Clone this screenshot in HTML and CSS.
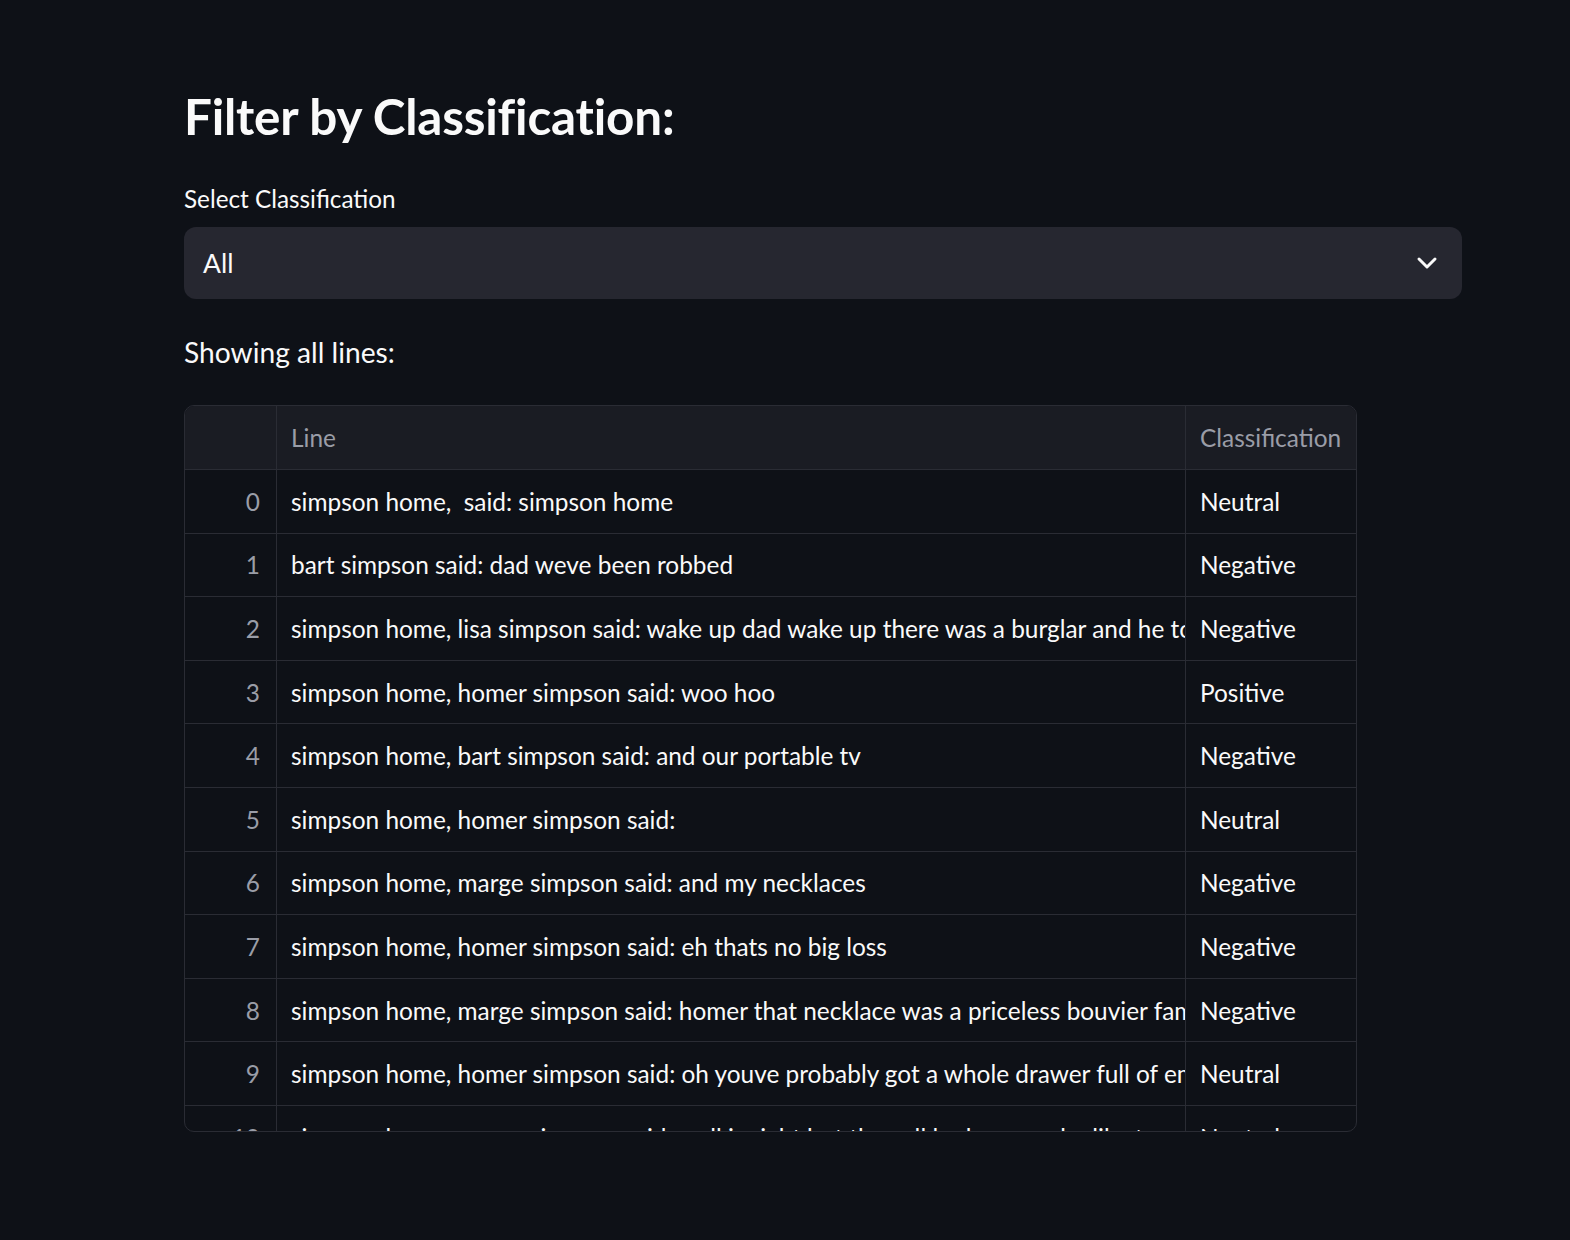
FILE: index.html
```html
<!DOCTYPE html>
<html>
<head>
<meta charset="utf-8">
<link rel="stylesheet" href="styles.css">
</head>
<body>
<main class="main">
  <h1 class="title">Filter by Classification:</h1>
  <div class="label">Select Classification</div>
  <div class="select">
    <span class="select-value">All</span>
    <svg class="chevron" width="22" height="14" viewBox="0 0 22 14"><path d="M3 3 L11 11 L19 3" fill="none" stroke="#fafafa" stroke-width="3" stroke-linecap="round" stroke-linejoin="round"/></svg>
  </div>
  <p class="showing">Showing all lines:</p>
  <div class="grid">
    <div class="row head">
      <div class="cell idx"></div>
      <div class="cell line">Line</div>
      <div class="cell cls">Classification</div>
    </div>
    <div class="row"><div class="cell idx">0</div><div class="cell line">simpson home,&nbsp; said: simpson home</div><div class="cell cls">Neutral</div></div>
    <div class="row"><div class="cell idx">1</div><div class="cell line">bart simpson said: dad weve been robbed</div><div class="cell cls">Negative</div></div>
    <div class="row"><div class="cell idx">2</div><div class="cell line">simpson home, lisa simpson said: wake up dad wake up there was a burglar and he took everything</div><div class="cell cls">Negative</div></div>
    <div class="row"><div class="cell idx">3</div><div class="cell line">simpson home, homer simpson said: woo hoo</div><div class="cell cls">Positive</div></div>
    <div class="row"><div class="cell idx">4</div><div class="cell line">simpson home, bart simpson said: and our portable tv</div><div class="cell cls">Negative</div></div>
    <div class="row"><div class="cell idx">5</div><div class="cell line">simpson home, homer simpson said:</div><div class="cell cls">Neutral</div></div>
    <div class="row"><div class="cell idx">6</div><div class="cell line">simpson home, marge simpson said: and my necklaces</div><div class="cell cls">Negative</div></div>
    <div class="row"><div class="cell idx">7</div><div class="cell line">simpson home, homer simpson said: eh thats no big loss</div><div class="cell cls">Negative</div></div>
    <div class="row"><div class="cell idx">8</div><div class="cell line">simpson home, marge simpson said: homer that necklace was a priceless bouvier family heirloom</div><div class="cell cls">Negative</div></div>
    <div class="row"><div class="cell idx">9</div><div class="cell line">simpson home, homer simpson said: oh youve probably got a whole drawer full of em</div><div class="cell cls">Neutral</div></div>
    <div class="row"><div class="cell idx">10</div><div class="cell line">simpson home, marge simpson said: well i might but they all look so much alike to me</div><div class="cell cls">Neutral</div></div>
  </div>
</main>
</body>
</html>
```
FILE: styles.css
```css
html, body {
  margin: 0;
  padding: 0;
  background: #0e1117;
}
body {
  font-family: "Lato", "Noto Sans", sans-serif;
  color: #fafafa;
  width: 1570px;
  height: 1240px;
}
.main {
  padding: 86px 0 0 184px;
  width: 1278px;
}
.title {
  margin: 0;
  font-size: 49.4px;
  font-weight: 700;
  line-height: 60px;
  letter-spacing: -0.2px;
}
.label {
  margin-top: 36px;
  font-size: 24.3px;
  line-height: 34px;
}
.select {
  margin-top: 11px;
  height: 72px;
  background: #262730;
  border-radius: 12px;
  display: flex;
  align-items: center;
  justify-content: space-between;
  padding: 0 24px 0 19px;
}
.select-value {
  font-size: 26.5px;
}
.chevron {
  display: block;
}
.showing {
  margin: 36px 0 0 0;
  font-size: 28.2px;
  line-height: 34px;
}
.grid {
  margin-top: 36px;
  width: 1171px;
  height: 725px;
  border: 1px solid #2a2c34;
  border-radius: 10px;
  overflow: hidden;
}
.row {
  display: grid;
  grid-template-columns: 91px 909px 171px;
  height: 63.6px;
  border-bottom: 1px solid #2a2c34;
  box-sizing: border-box;
}
.row.head {
  background: #1a1c23;
  height: 64px;
}
.cell {
  display: flex;
  align-items: center;
  white-space: nowrap;
  overflow: hidden;
  font-size: 24.4px;
  padding: 0 14px;
  box-sizing: border-box;
}
.cell + .cell {
  border-left: 1px solid #2a2c34;
}
.idx {
  justify-content: flex-end;
  color: #9a9da7;
  padding-right: 16px;
}
.head .cell {
  color: #9a9da7;
}
```
